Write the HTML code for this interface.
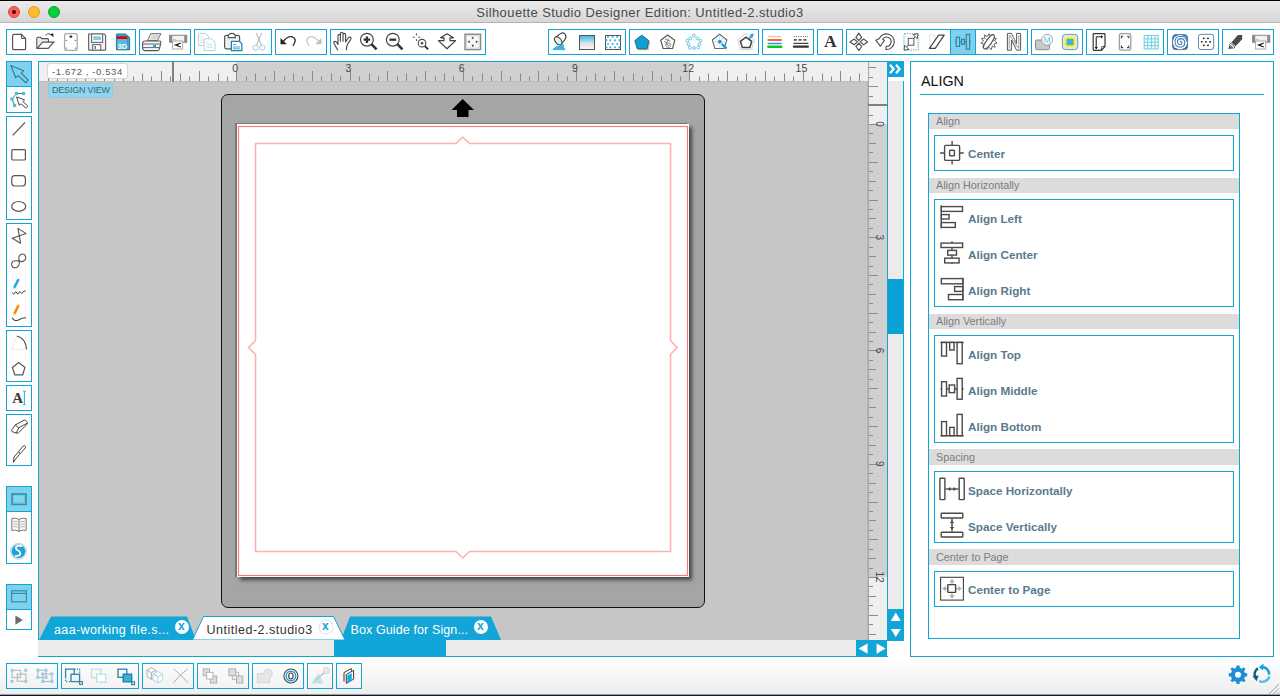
<!DOCTYPE html>
<html><head><meta charset="utf-8">
<style>
*{margin:0;padding:0;box-sizing:border-box}
html,body{width:1280px;height:696px;overflow:hidden;background:#fff;font-family:"Liberation Sans",sans-serif;position:relative}
.a{position:absolute}
#title{left:0;top:0;width:1280px;height:23px;background:linear-gradient(#ebebeb,#d6d6d6);border-top:1px solid #000;border-bottom:1px solid #b4b4b4}
#title .t{left:0;width:1280px;top:4px;text-align:center;font-size:13px;color:#4a4a4a;letter-spacing:0.4px}
.tl{width:12px;height:12px;border-radius:50%}
.grp{border:1px solid #0fa5d6;height:26px;top:29px;background:#fff}
.bgrp{border:1px solid #0fa5d6;height:26px;top:663px;background:linear-gradient(#fcfcfc,#f2f2f2)}
.vgrp{border:1px solid #0fa5d6;width:26px;left:6px;background:#fff}
#canvas{left:38px;top:61px;width:850px;height:579px;background:#c6c6c6;border-left:1px solid #0fa5d6;border-top:1px solid #0fa5d6}
.hdr{background:#dcdcdc;height:15px;font-size:10.8px;color:#7c7c7c;padding-left:7px;line-height:15px;white-space:nowrap}
.ibox{border:1px solid #0fa5d6;background:#fff}
.lbl{font-size:11.7px;font-weight:bold;color:#5a7a8c;white-space:nowrap}
</style></head><body>
<!-- title bar -->
<div id="title" class="a"><div class="a t">Silhouette Studio Designer Edition: Untitled-2.studio3</div>
<div class="a tl" style="left:8px;top:5px;background:#fc5f57;border:1px solid #e2463f"><div class="a" style="left:3px;top:3px;width:4px;height:4px;border-radius:50%;background:#4d0000"></div></div>
<div class="a tl" style="left:28px;top:5px;background:#fdbc2e;border:1px solid #e1a116"></div>
<div class="a tl" style="left:48px;top:5px;background:#03d03f;border:1px solid #0aa32c"></div>
</div>

<!-- top toolbar groups -->
<div class="a grp" style="left:6px;width:130px"></div>
<div class="a grp" style="left:139px;width:52px"></div>
<div class="a grp" style="left:194px;width:78px"></div>
<div class="a grp" style="left:275px;width:52px"></div>
<div class="a grp" style="left:330px;width:156px"></div>
<div class="a grp" style="left:548px;width:78px"></div>
<div class="a grp" style="left:629px;width:130px"></div>
<div class="a grp" style="left:762px;width:52px"></div>
<div class="a grp" style="left:817px;width:26px"></div>
<div class="a grp" style="left:846px;width:182px"></div>
<div class="a grp" style="left:1031px;width:52px"></div>
<div class="a grp" style="left:1086px;width:78px"></div>
<div class="a grp" style="left:1167px;width:52px"></div>
<div class="a grp" style="left:1222px;width:52px"></div>

<!-- canvas -->
<div id="canvas" class="a"></div>
<svg class="a" style="left:39px;top:62px" width="829" height="20">
<rect x="0" y="0" width="829" height="20" fill="#efefef"/>
<rect x="197.40" y="0" width="453.00" height="20" fill="#d0d0d0"/>
<rect x="0" y="19" width="829" height="1" fill="#bdbdbd"/>
<line x1="9.5" y1="9" x2="9.5" y2="19" stroke="#888" stroke-width="1"/>
<line x1="18.5" y1="14.5" x2="18.5" y2="19" stroke="#888" stroke-width="1"/>
<line x1="28.5" y1="11.5" x2="28.5" y2="19" stroke="#888" stroke-width="1"/>
<line x1="37.5" y1="14.5" x2="37.5" y2="19" stroke="#888" stroke-width="1"/>
<line x1="46.5" y1="9" x2="46.5" y2="19" stroke="#888" stroke-width="1"/>
<line x1="56.5" y1="14.5" x2="56.5" y2="19" stroke="#888" stroke-width="1"/>
<line x1="65.5" y1="11.5" x2="65.5" y2="19" stroke="#888" stroke-width="1"/>
<line x1="75.5" y1="14.5" x2="75.5" y2="19" stroke="#888" stroke-width="1"/>
<line x1="84.5" y1="9" x2="84.5" y2="19" stroke="#888" stroke-width="1"/>
<text x="83.0" y="10" font-family="Liberation Sans" font-size="10.5" fill="#444" text-anchor="middle">-3</text>
<line x1="94.5" y1="14.5" x2="94.5" y2="19" stroke="#888" stroke-width="1"/>
<line x1="103.5" y1="11.5" x2="103.5" y2="19" stroke="#888" stroke-width="1"/>
<line x1="112.5" y1="14.5" x2="112.5" y2="19" stroke="#888" stroke-width="1"/>
<line x1="122.5" y1="9" x2="122.5" y2="19" stroke="#888" stroke-width="1"/>
<line x1="131.5" y1="14.5" x2="131.5" y2="19" stroke="#888" stroke-width="1"/>
<line x1="141.5" y1="11.5" x2="141.5" y2="19" stroke="#888" stroke-width="1"/>
<line x1="150.5" y1="14.5" x2="150.5" y2="19" stroke="#888" stroke-width="1"/>
<line x1="160.5" y1="9" x2="160.5" y2="19" stroke="#888" stroke-width="1"/>
<line x1="169.5" y1="14.5" x2="169.5" y2="19" stroke="#888" stroke-width="1"/>
<line x1="179.5" y1="11.5" x2="179.5" y2="19" stroke="#888" stroke-width="1"/>
<line x1="188.5" y1="14.5" x2="188.5" y2="19" stroke="#888" stroke-width="1"/>
<line x1="197.5" y1="9" x2="197.5" y2="19" stroke="#888" stroke-width="1"/>
<text x="196.2" y="10" font-family="Liberation Sans" font-size="10.5" fill="#444" text-anchor="middle">0</text>
<line x1="207.5" y1="14.5" x2="207.5" y2="19" stroke="#888" stroke-width="1"/>
<line x1="216.5" y1="11.5" x2="216.5" y2="19" stroke="#888" stroke-width="1"/>
<line x1="226.5" y1="14.5" x2="226.5" y2="19" stroke="#888" stroke-width="1"/>
<line x1="235.5" y1="9" x2="235.5" y2="19" stroke="#888" stroke-width="1"/>
<line x1="245.5" y1="14.5" x2="245.5" y2="19" stroke="#888" stroke-width="1"/>
<line x1="254.5" y1="11.5" x2="254.5" y2="19" stroke="#888" stroke-width="1"/>
<line x1="263.5" y1="14.5" x2="263.5" y2="19" stroke="#888" stroke-width="1"/>
<line x1="273.5" y1="9" x2="273.5" y2="19" stroke="#888" stroke-width="1"/>
<line x1="282.5" y1="14.5" x2="282.5" y2="19" stroke="#888" stroke-width="1"/>
<line x1="292.5" y1="11.5" x2="292.5" y2="19" stroke="#888" stroke-width="1"/>
<line x1="301.5" y1="14.5" x2="301.5" y2="19" stroke="#888" stroke-width="1"/>
<line x1="311.5" y1="9" x2="311.5" y2="19" stroke="#888" stroke-width="1"/>
<text x="309.4" y="10" font-family="Liberation Sans" font-size="10.5" fill="#444" text-anchor="middle">3</text>
<line x1="320.5" y1="14.5" x2="320.5" y2="19" stroke="#888" stroke-width="1"/>
<line x1="330.5" y1="11.5" x2="330.5" y2="19" stroke="#888" stroke-width="1"/>
<line x1="339.5" y1="14.5" x2="339.5" y2="19" stroke="#888" stroke-width="1"/>
<line x1="348.5" y1="9" x2="348.5" y2="19" stroke="#888" stroke-width="1"/>
<line x1="358.5" y1="14.5" x2="358.5" y2="19" stroke="#888" stroke-width="1"/>
<line x1="367.5" y1="11.5" x2="367.5" y2="19" stroke="#888" stroke-width="1"/>
<line x1="377.5" y1="14.5" x2="377.5" y2="19" stroke="#888" stroke-width="1"/>
<line x1="386.5" y1="9" x2="386.5" y2="19" stroke="#888" stroke-width="1"/>
<line x1="396.5" y1="14.5" x2="396.5" y2="19" stroke="#888" stroke-width="1"/>
<line x1="405.5" y1="11.5" x2="405.5" y2="19" stroke="#888" stroke-width="1"/>
<line x1="414.5" y1="14.5" x2="414.5" y2="19" stroke="#888" stroke-width="1"/>
<line x1="424.5" y1="9" x2="424.5" y2="19" stroke="#888" stroke-width="1"/>
<text x="422.7" y="10" font-family="Liberation Sans" font-size="10.5" fill="#444" text-anchor="middle">6</text>
<line x1="433.5" y1="14.5" x2="433.5" y2="19" stroke="#888" stroke-width="1"/>
<line x1="443.5" y1="11.5" x2="443.5" y2="19" stroke="#888" stroke-width="1"/>
<line x1="452.5" y1="14.5" x2="452.5" y2="19" stroke="#888" stroke-width="1"/>
<line x1="462.5" y1="9" x2="462.5" y2="19" stroke="#888" stroke-width="1"/>
<line x1="471.5" y1="14.5" x2="471.5" y2="19" stroke="#888" stroke-width="1"/>
<line x1="481.5" y1="11.5" x2="481.5" y2="19" stroke="#888" stroke-width="1"/>
<line x1="490.5" y1="14.5" x2="490.5" y2="19" stroke="#888" stroke-width="1"/>
<line x1="499.5" y1="9" x2="499.5" y2="19" stroke="#888" stroke-width="1"/>
<line x1="509.5" y1="14.5" x2="509.5" y2="19" stroke="#888" stroke-width="1"/>
<line x1="518.5" y1="11.5" x2="518.5" y2="19" stroke="#888" stroke-width="1"/>
<line x1="528.5" y1="14.5" x2="528.5" y2="19" stroke="#888" stroke-width="1"/>
<line x1="537.5" y1="9" x2="537.5" y2="19" stroke="#888" stroke-width="1"/>
<text x="535.9" y="10" font-family="Liberation Sans" font-size="10.5" fill="#444" text-anchor="middle">9</text>
<line x1="547.5" y1="14.5" x2="547.5" y2="19" stroke="#888" stroke-width="1"/>
<line x1="556.5" y1="11.5" x2="556.5" y2="19" stroke="#888" stroke-width="1"/>
<line x1="565.5" y1="14.5" x2="565.5" y2="19" stroke="#888" stroke-width="1"/>
<line x1="575.5" y1="9" x2="575.5" y2="19" stroke="#888" stroke-width="1"/>
<line x1="584.5" y1="14.5" x2="584.5" y2="19" stroke="#888" stroke-width="1"/>
<line x1="594.5" y1="11.5" x2="594.5" y2="19" stroke="#888" stroke-width="1"/>
<line x1="603.5" y1="14.5" x2="603.5" y2="19" stroke="#888" stroke-width="1"/>
<line x1="613.5" y1="9" x2="613.5" y2="19" stroke="#888" stroke-width="1"/>
<line x1="622.5" y1="14.5" x2="622.5" y2="19" stroke="#888" stroke-width="1"/>
<line x1="632.5" y1="11.5" x2="632.5" y2="19" stroke="#888" stroke-width="1"/>
<line x1="641.5" y1="14.5" x2="641.5" y2="19" stroke="#888" stroke-width="1"/>
<line x1="650.5" y1="9" x2="650.5" y2="19" stroke="#888" stroke-width="1"/>
<text x="649.2" y="10" font-family="Liberation Sans" font-size="10.5" fill="#444" text-anchor="middle">12</text>
<line x1="660.5" y1="14.5" x2="660.5" y2="19" stroke="#888" stroke-width="1"/>
<line x1="669.5" y1="11.5" x2="669.5" y2="19" stroke="#888" stroke-width="1"/>
<line x1="679.5" y1="14.5" x2="679.5" y2="19" stroke="#888" stroke-width="1"/>
<line x1="688.5" y1="9" x2="688.5" y2="19" stroke="#888" stroke-width="1"/>
<line x1="698.5" y1="14.5" x2="698.5" y2="19" stroke="#888" stroke-width="1"/>
<line x1="707.5" y1="11.5" x2="707.5" y2="19" stroke="#888" stroke-width="1"/>
<line x1="716.5" y1="14.5" x2="716.5" y2="19" stroke="#888" stroke-width="1"/>
<line x1="726.5" y1="9" x2="726.5" y2="19" stroke="#888" stroke-width="1"/>
<line x1="735.5" y1="14.5" x2="735.5" y2="19" stroke="#888" stroke-width="1"/>
<line x1="745.5" y1="11.5" x2="745.5" y2="19" stroke="#888" stroke-width="1"/>
<line x1="754.5" y1="14.5" x2="754.5" y2="19" stroke="#888" stroke-width="1"/>
<line x1="764.5" y1="9" x2="764.5" y2="19" stroke="#888" stroke-width="1"/>
<text x="762.4" y="10" font-family="Liberation Sans" font-size="10.5" fill="#444" text-anchor="middle">15</text>
<line x1="773.5" y1="14.5" x2="773.5" y2="19" stroke="#888" stroke-width="1"/>
<line x1="783.5" y1="11.5" x2="783.5" y2="19" stroke="#888" stroke-width="1"/>
<line x1="792.5" y1="14.5" x2="792.5" y2="19" stroke="#888" stroke-width="1"/>
<line x1="801.5" y1="9" x2="801.5" y2="19" stroke="#888" stroke-width="1"/>
<line x1="811.5" y1="14.5" x2="811.5" y2="19" stroke="#888" stroke-width="1"/>
<line x1="820.5" y1="11.5" x2="820.5" y2="19" stroke="#888" stroke-width="1"/>
</svg>
<svg class="a" style="left:868px;top:62px" width="19" height="578">
<rect x="0" y="0" width="19" height="578" fill="#efefef"/>
<rect x="0" y="62.00" width="19" height="453.00" fill="#d0d0d0"/>
<rect x="0" y="0" width="1" height="578" fill="#a8a8a8"/>
<line x1="1" y1="5.5" x2="8" y2="5.5" stroke="#8a8a8a" stroke-width="1"/>
<line x1="1" y1="15.5" x2="5" y2="15.5" stroke="#8a8a8a" stroke-width="1"/>
<line x1="1" y1="24.5" x2="10" y2="24.5" stroke="#8a8a8a" stroke-width="1"/>
<line x1="1" y1="34.5" x2="5" y2="34.5" stroke="#8a8a8a" stroke-width="1"/>
<line x1="1" y1="43.5" x2="8" y2="43.5" stroke="#8a8a8a" stroke-width="1"/>
<line x1="1" y1="53.5" x2="5" y2="53.5" stroke="#8a8a8a" stroke-width="1"/>
<line x1="1" y1="62.5" x2="10" y2="62.5" stroke="#8a8a8a" stroke-width="1"/>
<text transform="translate(8,62.0) rotate(90)" x="0" y="0" font-family="Liberation Sans" font-size="10" fill="#4a4a4a" text-anchor="middle">0</text>
<line x1="1" y1="71.5" x2="5" y2="71.5" stroke="#8a8a8a" stroke-width="1"/>
<line x1="1" y1="81.5" x2="8" y2="81.5" stroke="#8a8a8a" stroke-width="1"/>
<line x1="1" y1="90.5" x2="5" y2="90.5" stroke="#8a8a8a" stroke-width="1"/>
<line x1="1" y1="100.5" x2="10" y2="100.5" stroke="#8a8a8a" stroke-width="1"/>
<line x1="1" y1="109.5" x2="5" y2="109.5" stroke="#8a8a8a" stroke-width="1"/>
<line x1="1" y1="119.5" x2="8" y2="119.5" stroke="#8a8a8a" stroke-width="1"/>
<line x1="1" y1="128.5" x2="5" y2="128.5" stroke="#8a8a8a" stroke-width="1"/>
<line x1="1" y1="138.5" x2="10" y2="138.5" stroke="#8a8a8a" stroke-width="1"/>
<line x1="1" y1="147.5" x2="5" y2="147.5" stroke="#8a8a8a" stroke-width="1"/>
<line x1="1" y1="156.5" x2="8" y2="156.5" stroke="#8a8a8a" stroke-width="1"/>
<line x1="1" y1="166.5" x2="5" y2="166.5" stroke="#8a8a8a" stroke-width="1"/>
<line x1="1" y1="175.5" x2="10" y2="175.5" stroke="#8a8a8a" stroke-width="1"/>
<text transform="translate(8,175.2) rotate(90)" x="0" y="0" font-family="Liberation Sans" font-size="10" fill="#4a4a4a" text-anchor="middle">3</text>
<line x1="1" y1="185.5" x2="5" y2="185.5" stroke="#8a8a8a" stroke-width="1"/>
<line x1="1" y1="194.5" x2="8" y2="194.5" stroke="#8a8a8a" stroke-width="1"/>
<line x1="1" y1="204.5" x2="5" y2="204.5" stroke="#8a8a8a" stroke-width="1"/>
<line x1="1" y1="213.5" x2="10" y2="213.5" stroke="#8a8a8a" stroke-width="1"/>
<line x1="1" y1="222.5" x2="5" y2="222.5" stroke="#8a8a8a" stroke-width="1"/>
<line x1="1" y1="232.5" x2="8" y2="232.5" stroke="#8a8a8a" stroke-width="1"/>
<line x1="1" y1="241.5" x2="5" y2="241.5" stroke="#8a8a8a" stroke-width="1"/>
<line x1="1" y1="251.5" x2="10" y2="251.5" stroke="#8a8a8a" stroke-width="1"/>
<line x1="1" y1="260.5" x2="5" y2="260.5" stroke="#8a8a8a" stroke-width="1"/>
<line x1="1" y1="270.5" x2="8" y2="270.5" stroke="#8a8a8a" stroke-width="1"/>
<line x1="1" y1="279.5" x2="5" y2="279.5" stroke="#8a8a8a" stroke-width="1"/>
<line x1="1" y1="288.5" x2="10" y2="288.5" stroke="#8a8a8a" stroke-width="1"/>
<text transform="translate(8,288.5) rotate(90)" x="0" y="0" font-family="Liberation Sans" font-size="10" fill="#4a4a4a" text-anchor="middle">6</text>
<line x1="1" y1="298.5" x2="5" y2="298.5" stroke="#8a8a8a" stroke-width="1"/>
<line x1="1" y1="307.5" x2="8" y2="307.5" stroke="#8a8a8a" stroke-width="1"/>
<line x1="1" y1="317.5" x2="5" y2="317.5" stroke="#8a8a8a" stroke-width="1"/>
<line x1="1" y1="326.5" x2="10" y2="326.5" stroke="#8a8a8a" stroke-width="1"/>
<line x1="1" y1="336.5" x2="5" y2="336.5" stroke="#8a8a8a" stroke-width="1"/>
<line x1="1" y1="345.5" x2="8" y2="345.5" stroke="#8a8a8a" stroke-width="1"/>
<line x1="1" y1="355.5" x2="5" y2="355.5" stroke="#8a8a8a" stroke-width="1"/>
<line x1="1" y1="364.5" x2="10" y2="364.5" stroke="#8a8a8a" stroke-width="1"/>
<line x1="1" y1="373.5" x2="5" y2="373.5" stroke="#8a8a8a" stroke-width="1"/>
<line x1="1" y1="383.5" x2="8" y2="383.5" stroke="#8a8a8a" stroke-width="1"/>
<line x1="1" y1="392.5" x2="5" y2="392.5" stroke="#8a8a8a" stroke-width="1"/>
<line x1="1" y1="402.5" x2="10" y2="402.5" stroke="#8a8a8a" stroke-width="1"/>
<text transform="translate(8,401.8) rotate(90)" x="0" y="0" font-family="Liberation Sans" font-size="10" fill="#4a4a4a" text-anchor="middle">9</text>
<line x1="1" y1="411.5" x2="5" y2="411.5" stroke="#8a8a8a" stroke-width="1"/>
<line x1="1" y1="421.5" x2="8" y2="421.5" stroke="#8a8a8a" stroke-width="1"/>
<line x1="1" y1="430.5" x2="5" y2="430.5" stroke="#8a8a8a" stroke-width="1"/>
<line x1="1" y1="440.5" x2="10" y2="440.5" stroke="#8a8a8a" stroke-width="1"/>
<line x1="1" y1="449.5" x2="5" y2="449.5" stroke="#8a8a8a" stroke-width="1"/>
<line x1="1" y1="458.5" x2="8" y2="458.5" stroke="#8a8a8a" stroke-width="1"/>
<line x1="1" y1="468.5" x2="5" y2="468.5" stroke="#8a8a8a" stroke-width="1"/>
<line x1="1" y1="477.5" x2="10" y2="477.5" stroke="#8a8a8a" stroke-width="1"/>
<line x1="1" y1="487.5" x2="5" y2="487.5" stroke="#8a8a8a" stroke-width="1"/>
<line x1="1" y1="496.5" x2="8" y2="496.5" stroke="#8a8a8a" stroke-width="1"/>
<line x1="1" y1="506.5" x2="5" y2="506.5" stroke="#8a8a8a" stroke-width="1"/>
<line x1="1" y1="515.5" x2="10" y2="515.5" stroke="#8a8a8a" stroke-width="1"/>
<text transform="translate(8,515.0) rotate(90)" x="0" y="0" font-family="Liberation Sans" font-size="10" fill="#4a4a4a" text-anchor="middle">12</text>
<line x1="1" y1="524.5" x2="5" y2="524.5" stroke="#8a8a8a" stroke-width="1"/>
<line x1="1" y1="534.5" x2="8" y2="534.5" stroke="#8a8a8a" stroke-width="1"/>
<line x1="1" y1="543.5" x2="5" y2="543.5" stroke="#8a8a8a" stroke-width="1"/>
<line x1="1" y1="553.5" x2="10" y2="553.5" stroke="#8a8a8a" stroke-width="1"/>
<line x1="1" y1="562.5" x2="5" y2="562.5" stroke="#8a8a8a" stroke-width="1"/>
<line x1="1" y1="572.5" x2="8" y2="572.5" stroke="#8a8a8a" stroke-width="1"/>
</svg>
<!-- corner box -->
<div class="a" style="left:47px;top:63px;width:81px;height:16px;background:#fff;border:1px solid #d8d8d8;border-radius:3px;font-size:9.5px;color:#5a5a5a;line-height:15px;padding-left:4px;letter-spacing:0.6px;white-space:nowrap">-1.672 , -0.534</div>
<div class="a" style="left:172px;top:62px;width:2px;height:20px;background:#808080"></div>
<div class="a" style="left:868px;top:104px;width:19px;height:2px;background:#808080"></div>
<div class="a" style="left:48px;top:83px;width:65px;height:15px;background:#8fd6ee;border:1px solid #9ac8d8;font-size:9px;color:#3f6676;line-height:12px;padding-left:3px;white-space:nowrap;letter-spacing:-0.2px">DESIGN VIEW</div>
<!-- mat -->
<div class="a" style="left:221px;top:94px;width:484px;height:514px;background:#a5a5a5;border:1.5px solid #111;border-radius:7px"></div>
<div class="a" style="left:237px;top:124px;width:452px;height:453px;background:#fff;box-shadow:3px 3px 4px rgba(0,0,0,0.6), -2px 0 0 #7a7a7a, -2px -1px 0 #7a7a7a"></div>
<svg class="a" style="left:0;top:0" width="1280" height="696">
<path d="M457 117V110H451.5L462.7 99L474 110H468.5V117Z" fill="#000"/>
<rect x="238.5" y="126.5" width="449" height="449" fill="none" stroke="#ff7a7a" stroke-width="1.2"/>
<path d="M255.5 143.5H456L462.7 137L469.5 143.5H670.5V340.5L677 347.5L670.5 354.5V551.5H469.5L462.7 558L456 551.5H255.5V354.5L248.5 347.5L255.5 340.5Z" fill="none" stroke="#ffb0b0" stroke-width="1.6"/>
</svg>
<!-- tabs -->
<svg class="a" style="left:0;top:0" width="1280" height="696">
<path d="M39 640L51 616.5H187L196 640Z" fill="#12a5d7"/>
<path d="M341 640L350 616.5H491L501 640Z" fill="#12a5d7"/>
<path d="M192.5 640L203.5 616.5H333.5L345 640Z" fill="#fff" stroke="#12a5d7" stroke-width="1"/>
<circle cx="182" cy="627" r="7" fill="#fff"/>
<circle cx="481" cy="627" r="7" fill="#fff"/>
<circle cx="326" cy="627" r="7" fill="#fff" stroke="#e0e0e0" stroke-width="1"/>
</svg>
<div class="a" style="left:54px;top:623px;font-size:12.5px;line-height:14px;letter-spacing:0.37px;color:#fff;white-space:nowrap">aaa-working file.s...</div>
<div class="a" style="left:206.5px;top:623px;font-size:12.5px;line-height:14px;letter-spacing:0.5px;color:#333;white-space:nowrap">Untitled-2.studio3</div>
<div class="a" style="left:350.5px;top:623px;font-size:12.5px;line-height:14px;letter-spacing:0.11px;color:#fff;white-space:nowrap">Box Guide for Sign...</div>
<div class="a" style="left:178px;top:619px;font-size:12px;font-weight:bold;color:#12a5d7">x</div>
<div class="a" style="left:477px;top:619px;font-size:12px;font-weight:bold;color:#12a5d7">x</div>
<div class="a" style="left:322px;top:619px;font-size:12px;font-weight:bold;color:#12a5d7">x</div>
<!-- h scrollbar -->
<div class="a" style="left:38px;top:640px;width:818px;height:16px;background:#ebebeb"></div>
<div class="a" style="left:334px;top:640px;width:112px;height:16px;background:#12a5d7"></div>
<div class="a" style="left:856px;top:640px;width:31px;height:16px;background:#12a5d7"></div>
<div class="a" style="left:38px;top:656px;width:850px;height:1px;background:#0fa5d6"></div>
<!-- v scrollbar -->
<div class="a" style="left:887px;top:61px;width:1px;height:580px;background:#0fa5d6"></div>
<div class="a" style="left:888px;top:61px;width:16px;height:16px;background:#12a5d7"></div>
<div class="a" style="left:888px;top:81px;width:15px;height:528px;background:#ebebeb"></div>
<div class="a" style="left:903px;top:81px;width:1px;height:560px;background:#0fa5d6"></div>
<div class="a" style="left:888px;top:279px;width:15px;height:55px;background:#0aa2d6"></div><div class="a" style="left:867px;top:81px;width:1px;height:559px;background:#b4b4b4"></div>
<div class="a" style="left:888px;top:609px;width:16px;height:32px;background:#12a5d7"></div>
<svg class="a" style="left:0;top:0" width="1280" height="696">
<path d="M890 73.2L893.6 69L890 64.8M896 73.2L899.6 69L896 64.8" fill="none" stroke="#fff" stroke-width="2.2"/>
<path d="M890.8 621L895.8 612.6L900.8 621Z M890.8 629L895.8 637L900.8 629Z" fill="#fff"/>
<path d="M858.6 648.6L867.6 643.4V653.8Z M876.6 643.4L885.6 648.6L876.6 653.8Z" fill="#fff"/>
</svg>

<!-- right panel -->
<div class="a" style="left:0;top:657px;width:1280px;height:39px;background:linear-gradient(#fff,#ededed)"></div>
<div class="a" style="left:0;top:694px;width:1280px;height:1px;background:#9aa0a6"></div><div class="a" style="left:0;top:695px;width:1280px;height:1px;background:#0d1b28"></div>
<div class="a" style="left:910px;top:61px;width:364px;height:596px;border:1px solid #0fa5d6;background:#fff"></div>
<div class="a" style="left:921px;top:72px;font-size:14.3px;color:#111;line-height:18px">ALIGN</div>
<div class="a" style="left:920px;top:94px;width:344px;height:1px;background:#0fa5d6"></div>
<div class="a" style="left:928px;top:113px;width:312px;height:526px;border:1px solid #0fa5d6"></div>
<div class="a hdr" style="left:929px;top:114px;width:310px">Align</div>
<div class="a hdr" style="left:929px;top:178px;width:310px">Align Horizontally</div>
<div class="a hdr" style="left:929px;top:314px;width:310px">Align Vertically</div>
<div class="a hdr" style="left:929px;top:449px;width:310px;height:16px;line-height:16px">Spacing</div>
<div class="a hdr" style="left:929px;top:549px;width:310px;height:16px;line-height:16px">Center to Page</div>
<div class="a ibox" style="left:934px;top:135px;width:300px;height:36px"></div>
<div class="a ibox" style="left:934px;top:199px;width:300px;height:108px"></div>
<div class="a ibox" style="left:934px;top:335px;width:300px;height:108px"></div>
<div class="a ibox" style="left:934px;top:471px;width:300px;height:72px"></div>
<div class="a ibox" style="left:934px;top:571px;width:300px;height:36px"></div>
<div class="a lbl" style="left:968px;top:146px;line-height:16px">Center</div>
<div class="a lbl" style="left:968px;top:211px;line-height:16px">Align Left</div>
<div class="a lbl" style="left:968px;top:247px;line-height:16px">Align Center</div>
<div class="a lbl" style="left:968px;top:283px;line-height:16px">Align Right</div>
<div class="a lbl" style="left:968px;top:347px;line-height:16px">Align Top</div>
<div class="a lbl" style="left:968px;top:383px;line-height:16px">Align Middle</div>
<div class="a lbl" style="left:968px;top:419px;line-height:16px">Align Bottom</div>
<div class="a lbl" style="left:968px;top:483px;line-height:16px">Space Horizontally</div>
<div class="a lbl" style="left:968px;top:519px;line-height:16px">Space Vertically</div>
<div class="a lbl" style="left:968px;top:582px;line-height:16px">Center to Page</div>
<!-- left toolbar -->
<div class="a vgrp" style="top:61px;height:52px"></div>
<div class="a vgrp" style="top:116px;height:104px"></div>
<div class="a vgrp" style="top:223px;height:104px"></div>
<div class="a vgrp" style="top:330px;height:52px"></div>
<div class="a vgrp" style="top:385px;height:26px"></div>
<div class="a vgrp" style="top:414px;height:52px"></div>
<div class="a vgrp" style="top:486px;height:78px"></div>
<div class="a vgrp" style="top:584px;height:46px"></div>
<div class="a" style="left:7px;top:62px;width:24px;height:25px;background:#80d1ec;border-bottom:1px solid #0fa5d6"></div>
<div class="a" style="left:7px;top:487px;width:24px;height:25px;background:#80d1ec;border-bottom:1px solid #0fa5d6"></div>
<div class="a" style="left:7px;top:585px;width:24px;height:25px;background:#80d1ec;border-bottom:1px solid #0fa5d6"></div>
<!-- bottom toolbar -->
<div class="a bgrp" style="left:6px;width:52px"></div>
<div class="a bgrp" style="left:61px;width:78px"></div>
<div class="a bgrp" style="left:142px;width:52px"></div>
<div class="a bgrp" style="left:197px;width:52px"></div>
<div class="a bgrp" style="left:252px;width:52px"></div>
<div class="a bgrp" style="left:307px;width:26px"></div>
<div class="a bgrp" style="left:336px;width:26px"></div>
<svg class="a" style="left:0;top:0" width="1280" height="60">
<defs>
<linearGradient id="gr1" x1="0" y1="0" x2="0" y2="1"><stop offset="0" stop-color="#3cb9e4"/><stop offset="0.4" stop-color="#9fd8ec"/><stop offset="0.5" stop-color="#dcdcdc"/><stop offset="1" stop-color="#fafafa"/></linearGradient>
</defs>
<!-- G0 -->
<path d="M12.6 35.8Q12.6 34.4 14 34.4H21.4L25.6 38.4V48.4Q25.6 49.7 24.3 49.7H14Q12.6 49.7 12.6 48.4Z" fill="#fff" stroke="#555" stroke-width="1.2"/>
<path d="M21.4 34.4V37.2Q21.4 38.4 22.6 38.4H25.6" fill="none" stroke="#555" stroke-width="1.1"/>
<path d="M36.8 48.2V38.6Q36.8 37.3 38 37.3H40.6L41.8 38.6H47.3Q48.5 38.6 48.5 39.8V42.2" fill="#ececec" stroke="#555" stroke-width="1.1"/>
<path d="M37.2 48.4L42.6 42.2H53.8L48.2 48.4Z" fill="#fff" stroke="#555" stroke-width="1.2"/>
<path d="M45.6 35.8Q47 32.4 50.8 34.6" fill="none" stroke="#444" stroke-width="0.9"/>
<path d="M49.8 34.2L53.6 37.2L53.2 33.2Z" fill="#222"/>
<rect x="64.6" y="33.6" width="12.6" height="16.8" rx="2.2" fill="#fff" stroke="#aaa" stroke-width="1.3"/>
<path d="M69.5 36.6H72.3M70.9 35.2V38" stroke="#333" stroke-width="1.3"/>
<path d="M65.6 40.4H67.2M74.6 40.4H76.2M65.6 48.2H67.2M74.6 48.2H76.2" stroke="#777" stroke-width="1"/>
<path d="M88.6 34H104.2L105.6 35.4V49.6Q105.6 50.2 105 50.2H89.2Q88.6 50.2 88.6 49.6Z" fill="#f2f2f2" stroke="#6a6a6a" stroke-width="1.2"/>
<rect x="91.6" y="34" width="11" height="8.4" fill="#fff" stroke="#6a6a6a" stroke-width="1.1"/>
<rect x="93.3" y="36.3" width="7.6" height="3.6" fill="#7ecbe2"/>
<rect x="92.7" y="44.6" width="8" height="5.6" fill="#fff" stroke="#6a6a6a" stroke-width="1.1"/>
<rect x="94.6" y="46" width="1.2" height="3" fill="#555"/>
<path d="M116.4 34H125.4L129.6 37.4V49.8H116.4Z" fill="#3aa6cf" stroke="#1c7aa0" stroke-width="1"/>
<path d="M117.4 36.8V49H126.6V37.2" fill="#56bde0"/>
<rect x="117" y="36.2" width="10.4" height="2.8" fill="#e00404"/>
<text x="117.6" y="48.6" font-family="Liberation Sans" font-weight="bold" font-size="7.5" fill="#fff">3D</text>
<!-- G1 -->
<path d="M150.8 33.6H161L157.4 40.6H147.6Z" fill="#e6e6e6" stroke="#777" stroke-width="1"/>
<path d="M152 36H158.4M151 38.2H157.4" stroke="#bbb" stroke-width="0.8"/>
<path d="M144.6 41H159.6Q161.2 41 160.8 43.2L159.4 49.2Q159 50.6 157.4 50.6H145.4Q142.6 50.6 142.6 47.2V44Q142.6 41 144.6 41Z" fill="#f5f5f5" stroke="#555" stroke-width="1.1"/>
<path d="M143 44H160M143 47.6H159.4" stroke="#666" stroke-width="1"/>
<rect x="153" y="44.8" width="3" height="2.6" fill="#1aa8e0"/>
<rect x="169.6" y="35.3" width="17.2" height="7" fill="#f2f2f2" stroke="#8a8a8a" stroke-width="1"/>
<rect x="169.6" y="35.3" width="2.6" height="7" fill="#8a8a8a"/>
<rect x="184.2" y="35.3" width="2.6" height="7" fill="#8a8a8a"/>
<path d="M172.6 39.6H176" stroke="#7cc8e4" stroke-width="0.8"/>
<rect x="172.6" y="41" width="10" height="8" fill="#fff" stroke="#aaa" stroke-width="1"/>
<path d="M180.8 43L175.6 45L180.8 47M178 44V46" fill="none" stroke="#222" stroke-width="1.3"/>
<!-- G2 -->
<path d="M198.6 34.6Q198.6 33.4 199.8 33.4H205.6L208.6 36.4V45.6H198.6Z" fill="#fff" stroke="#c8c8c8" stroke-width="1"/>
<path d="M200.6 37.6H202.6M200.6 40H204M200.6 42.4H204" stroke="#ccc" stroke-width="0.8"/>
<path d="M204.2 38.8H211.6L215 42.2V50.6H204.2Z" fill="#fff" stroke="#a6d8e8" stroke-width="1"/>
<path d="M206.4 42.4H208M206.4 44.8H212.4M206.4 47.2H212.4" stroke="#a6d8e8" stroke-width="0.8"/>
<rect x="224.6" y="35.4" width="15" height="13.4" rx="1.8" fill="#f0f0f0" stroke="#555" stroke-width="1.2"/>
<path d="M228.2 37.6Q228.2 33.4 231.8 33.4Q235.4 33.4 235.4 37.6Z" fill="#fff" stroke="#555" stroke-width="1.1"/>
<path d="M231.4 41.4H239.4L241.8 43.8V50.6H231.4Z" fill="#fff" stroke="#1a86b0" stroke-width="1.3"/>
<path d="M233 44.6H236.4M233 47H240M233 48.8H240" stroke="#3a9cc0" stroke-width="0.9"/>
<path d="M256.2 33L261.4 45.2M261.6 33L256.6 45.2" stroke="#a8a8a8" stroke-width="0.9"/>
<circle cx="255.6" cy="47.6" r="2.6" fill="none" stroke="#9ccfe0" stroke-width="1"/>
<circle cx="262.4" cy="47.6" r="2.6" fill="none" stroke="#9ccfe0" stroke-width="1"/>
<!-- G3 -->
<path d="M283.4 41.2Q288 35.6 292.4 36.8Q296.4 38.6 294.6 42.6Q294 44.4 292.8 45.8" fill="none" stroke="#333" stroke-width="1.4"/>
<path d="M280.5 38V44.3H286.8Z" fill="#222"/>
<path d="M318.6 41.2Q314 35.6 309.6 36.8Q305.6 38.6 307.4 42.6Q308 44.4 309.2 45.8" fill="none" stroke="#c6c6c6" stroke-width="1.3"/>
<path d="M321.5 38V44.3H315.2Z" fill="#c0c0c0"/>
<!-- G4 -->
<path d="M337.8 50.2L334.2 43.8Q333.2 41.6 334.8 41.4Q336 41.2 337 42.8L338 44.4V35.6Q338 34.4 339.2 34.4Q340.4 34.4 340.4 35.6V41.2V33.4Q340.4 32.2 341.7 32.2Q343 32.2 343 33.4V41.2V34.6Q343 33.4 344.3 33.4Q345.6 33.4 345.6 34.6V42L348.4 37.8Q349.4 36.6 350.6 37.2Q351.6 38 350.8 39.2L347.4 44.6Q346.4 46.6 346.4 50.2" fill="#fff" stroke="#444" stroke-width="1.1" stroke-linejoin="round"/>
<circle cx="366.9" cy="39.7" r="6.4" fill="#fff" stroke="#444" stroke-width="1.2"/>
<path d="M363.6 39.7H370.2M366.9 36.4V43" stroke="#333" stroke-width="2.3"/>
<path d="M371.4 44.2L376.6 49.4" stroke="#333" stroke-width="2.6"/>
<circle cx="392.8" cy="39.7" r="6.4" fill="#fff" stroke="#444" stroke-width="1.2"/>
<path d="M389.4 39.7H396.2" stroke="#333" stroke-width="2.3"/>
<path d="M397.3 44.2L402.5 49.4" stroke="#333" stroke-width="2.6"/>
<path d="M416.5 33.4V35.2M416.5 39.2V41M412.8 37.2H414.6M418.4 37.2H420.2" stroke="#444" stroke-width="1.1"/>
<circle cx="422" cy="43.2" r="3.8" fill="#fff" stroke="#444" stroke-width="1.1"/>
<path d="M420.7 43.2H423.3M422 41.9V44.5" stroke="#444" stroke-width="1.4"/>
<path d="M424.8 46L428.2 49.4" stroke="#333" stroke-width="1.8"/>
<path d="M447 33.8L440.6 37.8H444V40.6H438.4L447 48.8L455.6 40.6H450V37.8H453.4Z" fill="#fff" stroke="#444" stroke-width="1.2" stroke-linejoin="round"/>
<rect x="465" y="34.2" width="15.6" height="15.4" fill="#eee" stroke="#8a8a8a" stroke-width="1.4"/>
<rect x="466.6" y="35.8" width="12.4" height="12.2" fill="#fafafa" stroke="#d0d0d0" stroke-width="0.8"/>
<path d="M471.4 38.8L472.8 36.4L474.2 38.8ZM471.4 44.8L472.8 47.2L474.2 44.8ZM469.8 40.4L467.4 41.8L469.8 43.2ZM475.8 40.4L478.2 41.8L475.8 43.2Z" fill="#444"/>
<!-- G5 -->
<path d="M555.6 37.2L560.8 33.4Q563.6 32 565.4 34.6Q566.8 37 564.6 40.2L561 44.2" fill="#fff" stroke="#444" stroke-width="1.1"/>
<ellipse cx="558.2" cy="40.8" rx="2.9" ry="4.6" transform="rotate(-38 558.2 40.8)" fill="#ececec" stroke="#444" stroke-width="1.1"/>
<path d="M553 48.6Q556 46.2 559.6 45.6Q562 45 563 43.6L563.8 45.2Q563.2 47 565.4 49.2Q566.2 50.4 563.6 50.2Q558 49.6 553.6 50.2Q552.4 49.6 553 48.6Z" fill="#3ab6e0"/>
<rect x="579.5" y="35.5" width="15" height="14" fill="url(#gr1)" stroke="#555" stroke-width="1"/>
<rect x="605.5" y="35.5" width="15" height="14" fill="#fff" stroke="#555" stroke-width="1"/>
<g fill="#3ab6e0"><circle cx="608" cy="37" r="1.1"/><circle cx="612.6" cy="37" r="1.1"/><circle cx="617.2" cy="37" r="1.1"/><circle cx="610.3" cy="40.3" r="1.1"/><circle cx="614.9" cy="40.3" r="1.1"/><circle cx="619.4" cy="40.3" r="1.1"/><circle cx="606.5" cy="40.3" r="1.1"/><circle cx="608" cy="44" r="1.1"/><circle cx="612.6" cy="44" r="1.1"/><circle cx="617.2" cy="44" r="1.1"/><circle cx="606.5" cy="47.3" r="1.1"/><circle cx="610.3" cy="47.3" r="1.1"/><circle cx="614.9" cy="47.3" r="1.1"/><circle cx="619.4" cy="47.3" r="1.1"/></g>
<!-- G6 -->
<path d="M643.2 36.6L650.2 42L648.4 50.2H638.6L636.2 42Z" fill="#999" opacity="0.7"/>
<path d="M641.8 35.1L648.8 40.6L647 48.8H637.2L634.8 40.6Z" fill="#0ea0cf" stroke="#23566a" stroke-width="0.8"/>
<path d="M667.7 35.1L674.7 40.3L672.6 48.5H663.1L660.7 40.3Z" fill="#fff" stroke="#555" stroke-width="1.2"/>
<path d="M665 39L670.6 41.4M664 41.6L671.4 44.4M665.6 44L671 46.4M666 46.6L669.6 47.6M668.6 38.6L665.4 45.8" stroke="#777" stroke-width="0.9"/>
<g fill="#fff" stroke="#4ec0e6" stroke-width="0.9"><circle cx="693.9" cy="35.6" r="1.4"/><circle cx="697.4" cy="38.4" r="1.4"/><circle cx="700.5" cy="40.6" r="1.4"/><circle cx="699.4" cy="44.2" r="1.4"/><circle cx="698.3" cy="47.6" r="1.4"/><circle cx="694" cy="48" r="1.4"/><circle cx="689.8" cy="47.6" r="1.4"/><circle cx="688.5" cy="44.2" r="1.4"/><circle cx="687.4" cy="40.6" r="1.4"/><circle cx="690.4" cy="38.4" r="1.4"/></g>
<path d="M719.6 34.3L726.9 40L724.1 48.5H714.9L712.3 40Z" fill="#fff" stroke="#666" stroke-width="1.1"/>
<path d="M719.7 36V39.6M714.4 41.8H717.6M722 41.8H725M716.4 46L718.4 44M719.7 44.4V47.6M716.2 37.8L718 40M723.2 37.8L721.4 40" stroke="#ccc" stroke-width="0.8"/>
<circle cx="719.8" cy="41.8" r="2" fill="#1a9ee0"/>
<path d="M721.8 43.8L726.6 48.6" stroke="#1a9ee0" stroke-width="2.4"/>
<path d="M746 33.4L754.4 39.8L751.6 49.8H740.4L737.6 39.8Z" fill="none" stroke="#cfcfcf" stroke-width="0.9"/>
<path d="M746 37.2L751.7 41.3L749.9 47.5H742.4L740.3 41.3Z" fill="#fff" stroke="#444" stroke-width="1.5"/>
<path d="M749.2 38.6L752.4 35.4" stroke="#1aa0d8" stroke-width="1.8"/>
<path d="M753.8 33.4L749.8 34.6L752.6 37.4Z" fill="#1aa0d8"/>
<!-- G7 -->
<path d="M768.2 36.6H781.2" stroke="#f6bf76" stroke-width="1.1"/>
<path d="M768.4 39.9H781" stroke="#ff5c5c" stroke-width="2" stroke-linecap="round"/>
<path d="M768.4 43.4H781" stroke="#1aa0d8" stroke-width="1.5" stroke-linecap="round"/>
<path d="M768.4 46.7H781.2" stroke="#0cc424" stroke-width="2.6" stroke-linecap="round"/>
<path d="M793.6 36.6H808" stroke="#555" stroke-width="1" stroke-dasharray="1 1.3"/>
<path d="M793.8 39.9H808" stroke="#555" stroke-width="1.8" stroke-dasharray="3 1.8"/>
<path d="M794 43.4H807.8" stroke="#444" stroke-width="1.4" stroke-linecap="round"/>
<path d="M794 46.7H807.8" stroke="#333" stroke-width="2.3" stroke-linecap="round"/>
<!-- G8 -->
<text x="830.2" y="47.4" font-family="Liberation Serif" font-weight="bold" font-size="17.5" fill="#333" text-anchor="middle">A</text>
<!-- G9 -->
<g fill="#fff" stroke="#555" stroke-width="1.2" stroke-linejoin="round">
<path d="M858.8 33.2L861.7 37.4L858.8 40.7L855.9 37.4Z"/><path d="M858.8 50.4L861.7 46.5L858.8 43.1L855.9 46.5Z"/>
<path d="M850 41.9L854.1 39L857.4 41.9L854.1 44.8Z"/><path d="M867.6 41.9L863.6 39L860.2 41.9L863.6 44.8Z"/>
</g>
<path d="M879.36 38.56A7.8 7.8 0 1 1 886 49.5L886.2 46.3A4.6 4.6 0 1 0 882.6 39.26L884.4 40.4L880.3 46.2L875.8 40.2Z" fill="#fff" stroke="#4a4a4a" stroke-width="1.1" stroke-linejoin="round"/>
<rect x="904" y="33.8" width="14.2" height="16.2" rx="1" fill="none" stroke="#3a92b8" stroke-width="1.1" stroke-dasharray="1 1.3"/>
<rect x="908.3" y="38.4" width="5.6" height="6.8" fill="#fff" stroke="#6a6a6a" stroke-width="1.1"/>
<path d="M913.9 38.4L915.8 36.2M908.3 45.2L906.4 47.4" stroke="#555" stroke-width="1"/>
<path d="M918 33.6L913.2 34.6L917.2 38.8ZM904 50.2L904.8 45.2L908.8 49.4Z" fill="#fff" stroke="#555" stroke-width="1" stroke-linejoin="round"/>
<rect x="929.6" y="35" width="5.4" height="13.4" fill="none" stroke="#e4e4e4" stroke-width="0.8"/>
<path d="M929.4 48.4L938.6 35.2H944.2L935.2 48.4Z" fill="#fff" stroke="#444" stroke-width="1.2" stroke-linejoin="round"/>
<rect x="950.5" y="29.5" width="25" height="25" fill="#80d1ec" stroke="#0fa5d6" stroke-width="1"/>
<path d="M955 41.8H971" stroke="#2a7f9e" stroke-width="1"/>
<rect x="956.2" y="37.2" width="3.4" height="9.2" fill="#80d1ec" stroke="#2a7f9e" stroke-width="1.1"/>
<rect x="961.6" y="39.3" width="2.8" height="5" fill="#80d1ec" stroke="#2a7f9e" stroke-width="1.1"/>
<rect x="966.3" y="34.4" width="3.4" height="14.8" fill="#80d1ec" stroke="#2a7f9e" stroke-width="1.1"/>
<path d="M989.00 33.60L990.58 36.43L993.43 34.90L993.23 38.13L996.46 38.39L994.54 41.00L997.12 42.97L994.09 44.13L995.20 47.17L992.03 46.51L991.31 49.67L989.00 47.40L986.69 49.67L985.97 46.51L982.80 47.17L983.91 44.13L980.88 42.97L983.46 41.00L981.54 38.39L984.77 38.13L984.57 34.90L987.42 36.43Z" fill="#fff" stroke="#555" stroke-width="0.9" stroke-linejoin="round"/>
<path d="M985.6 38L987 40.4M992.4 45.6L991 43.2M984 42.6L986.4 43M994 41L991.6 40.6" stroke="#999" stroke-width="0.7"/>
<ellipse cx="989" cy="41.8" rx="2.6" ry="8.4" transform="rotate(35 989 41.8)" fill="#fff" stroke="#444" stroke-width="1.1"/>
<path d="M1007.4 50.2V33.4H1011.4L1016.6 43.6V33.4H1020.6V50.2H1016.6L1011.4 40V50.2Z" fill="#fff" stroke="#555" stroke-width="1" stroke-linejoin="round"/>
<path d="M1009.2 35V48.6M1018.8 35V48.6M1009.6 35L1018.4 48.4" stroke="#888" stroke-width="0.8"/>
<path d="M1013 36.4L1016 42.2M1012 39.6L1015.6 46.6" stroke="#aaa" stroke-width="0.7"/>
<!-- G10 -->
<rect x="1035.5" y="40" width="14" height="9.7" rx="1.2" fill="#c8c8c8" stroke="#8a8a8a" stroke-width="1"/>
<circle cx="1047.1" cy="39.7" r="5.4" fill="#fff" stroke="#9a9a9a" stroke-width="0.9"/>
<text x="1047.1" y="42.8" font-family="Liberation Sans" font-size="8.5" fill="#5cc4ea" text-anchor="middle">M</text>
<rect x="1062.4" y="34.4" width="15.4" height="15.2" rx="3.2" fill="#e6e6ea" stroke="#5aa2bc" stroke-width="1"/>
<path d="M1066.2 38.6Q1068 37 1070 38.2Q1072 37 1073.8 38.6Q1075.4 40.2 1074 42Q1075.4 43.8 1073.8 45.4Q1072 47 1070 45.8Q1068 47 1066.2 45.4Q1064.6 43.8 1066 42Q1064.6 40.2 1066.2 38.6Z" fill="#40b2e2" stroke="#fff200" stroke-width="1.6"/>
<!-- G11 -->
<path d="M1093.2 34.4Q1093.2 33.6 1094 33.6H1104.2Q1105 33.6 1105 34.4V46.6L1101.4 50.4H1094Q1093.2 50.4 1093.2 49.6Z" fill="#fff" stroke="#333" stroke-width="1.2"/>
<path d="M1101.4 50.4V47.6Q1101.4 46.6 1102.4 46.6H1105" fill="none" stroke="#333" stroke-width="1"/>
<path d="M1096.2 47.6V37.6Q1096.2 36.8 1097 36.8H1101" fill="none" stroke="#222" stroke-width="1.1"/>
<path d="M1101 35.2L1103.2 36.8L1101 38.4ZM1094.6 47L1096.2 49.4L1097.8 47Z" fill="#111"/>
<rect x="1119.4" y="33.6" width="11.4" height="16.6" rx="1.6" fill="#fff" stroke="#a0a0a0" stroke-width="1.3"/>
<path d="M1121.4 38.2V36.2H1123.2M1128.8 38.2V36.2H1127M1121.4 45.6V47.6H1123.2M1128.8 45.6V47.6H1127" fill="none" stroke="#444" stroke-width="1.1"/>
<g stroke="#6ccfe8" stroke-width="1"><path d="M1144.2 35.2V49M1147.8 35.2V49M1151.4 35.2V49M1155 35.2V49M1158.2 35.2V49"/><path d="M1143.8 35.4H1158.6M1143.8 38.9H1158.6M1143.8 42.2H1158.6M1143.8 45.6H1158.6M1143.8 48.9H1158.6"/></g>
<!-- G12 -->
<rect x="1172.6" y="34.6" width="15" height="15" rx="3.2" fill="#3a6fa8" stroke="#3a6fa8" stroke-width="0.8"/>
<circle cx="1180.1" cy="42.1" r="7.2" fill="#fff"/>
<path d="M1180.4 42.2Q1180.2 41.2 1181 41.4Q1182.2 41.8 1182 43Q1181.6 44.6 1179.8 44.6Q1177.6 44.4 1177.4 42Q1177.6 38.8 1180.6 38.6Q1184.4 38.6 1184.8 42.2Q1184.8 46.8 1180.2 47.2Q1175.2 47 1175 42Q1175.2 36.2 1180.6 36.2Q1186.8 36.4 1187 42.2" fill="none" stroke="#4a82bc" stroke-width="1.1"/>
<path d="M1174 36.4L1175.4 37.6M1186.2 36.4L1184.8 37.6M1174 47.8L1175.4 46.6" stroke="#fff" stroke-width="0.7"/>
<rect x="1198.5" y="34.3" width="15.2" height="15.2" rx="2.6" fill="#fff" stroke="#5a8ab8" stroke-width="1"/>
<g fill="#111"><circle cx="1203.8" cy="38.3" r="0.9"/><circle cx="1208" cy="38.3" r="0.9"/><circle cx="1201.8" cy="41.8" r="0.9"/><circle cx="1205.9" cy="41.8" r="0.9"/><circle cx="1210" cy="41.8" r="0.9"/><circle cx="1203.8" cy="45.3" r="0.9"/><circle cx="1208" cy="45.3" r="0.9"/></g>
<!-- G13 -->
<path d="M1231.4 42.4L1237.4 35.6Q1237.8 35.1 1238.4 35.1H1242.2V39.2L1235.6 46.2Z" fill="#4a4a4a"/>
<path d="M1230.6 43.2L1235 47L1233.6 48.4L1229.4 44.6Z" fill="#fff" stroke="#4a4a4a" stroke-width="0.9"/>
<path d="M1229.2 45.2L1233 48.6L1228.4 49Z" fill="#555"/>
<rect x="1252.6" y="35.3" width="17.2" height="7" fill="#f2f2f2" stroke="#8a8a8a" stroke-width="1"/>
<rect x="1252.6" y="35.3" width="2.6" height="7" fill="#8a8a8a"/>
<rect x="1267.2" y="35.3" width="2.6" height="7" fill="#8a8a8a"/>
<path d="M1255.6 39.6H1259" stroke="#7cc8e4" stroke-width="0.8"/>
<rect x="1255.6" y="41" width="10" height="8" fill="#fff" stroke="#aaa" stroke-width="1"/>
<path d="M1263.8 43L1258.6 45L1263.8 47M1261 44V46" fill="none" stroke="#222" stroke-width="1.3"/>
</svg>

<svg class="a" style="left:0;top:0" width="40" height="640">
<!-- select -->
<path d="M10.9 65.5L23.6 70.7L21.2 73.3L27.6 79.4Q28.2 80.2 27.4 81L26.6 82Q25.8 82.8 25 82L18.4 75.6L15.7 77.8Z" fill="#80d1ec" stroke="#2a7f9e" stroke-width="1.2" stroke-linejoin="round"/>
<!-- node edit -->
<path d="M16.5 93.5H23.6M16.5 93.5L12 99.1L14.6 105.5" fill="none" stroke="#555" stroke-width="0.9"/>
<g fill="#45bde6"><rect x="14.9" y="91.9" width="3.2" height="3.2"/><rect x="22" y="91.9" width="3.2" height="3.2"/><rect x="10.4" y="97.5" width="3.2" height="3.2"/><rect x="13" y="103.9" width="3.2" height="3.2"/></g>
<path d="M16.6 96.9L24.6 99.9L22.9 101.6L27.4 105.6Q27.9 106.2 27.4 106.8L26.6 107.6Q26 108.1 25.4 107.6L21 103.8L19.2 105.2Z" fill="#fff" stroke="#444" stroke-width="1" stroke-linejoin="round"/>
<!-- line/rect/rrect/ellipse -->
<path d="M12.7 135.4L25.1 122.3" stroke="#555" stroke-width="1.2"/>
<rect x="11.8" y="149.6" width="13.6" height="10.4" rx="1" fill="none" stroke="#555" stroke-width="1.2"/>
<rect x="11.8" y="175.6" width="13.6" height="10.4" rx="3" fill="none" stroke="#555" stroke-width="1.2"/>
<ellipse cx="18.7" cy="206.4" rx="7" ry="4.9" fill="none" stroke="#555" stroke-width="1.2"/>
<!-- polygon / curve / pens -->
<path d="M18 228.4L26.2 233.6L12.2 238.2L20.6 243.2Z" fill="none" stroke="#555" stroke-width="1.1" stroke-linejoin="round"/>
<path d="M19.4 261.4Q17.6 256.4 20.8 254.4Q24.6 252.8 25.6 256.6Q26.4 260.4 22 261.6L16.4 260.8Q12.2 260.2 11.6 263.6Q11.4 267.8 15.6 267.8Q19.4 267.4 19.4 261.4Z" fill="none" stroke="#555" stroke-width="1.1"/>
<path d="M18.2 280L14.2 287.6" stroke="#22a8dc" stroke-width="2.6" stroke-linecap="round"/>
<path d="M14.2 287.6L13.2 289.6" stroke="#cfe8f2" stroke-width="2"/>
<path d="M12 292.6L13.8 294.2L15.8 291.6L17.8 294.2L19.8 291.6L21.8 293.6L23.6 291.4L25.8 290.8" fill="none" stroke="#444" stroke-width="1"/>
<path d="M18.2 306L14.4 313.6" stroke="#ff8a00" stroke-width="2.6" stroke-linecap="round"/>
<path d="M14.4 313.6L13.4 315.6" stroke="#f4dcc0" stroke-width="2"/>
<path d="M12.4 317.6Q13.8 321.8 18.4 320Q22.6 317.6 26 317.8" fill="none" stroke="#444" stroke-width="1.1"/>
<!-- arc / pentagon -->
<path d="M16.8 336Q25.8 338.2 26.6 349.4" fill="none" stroke="#444" stroke-width="1.2"/>
<path d="M16.6 336.4L11.6 349.4H26.4" fill="none" stroke="#e4e4e4" stroke-width="0.8"/>
<path d="M18.7 362.6L25 367.4L22.7 374.8H14.7L12.4 367.4Z" fill="none" stroke="#555" stroke-width="1.2" stroke-linejoin="round"/>
<!-- text -->
<text x="17.6" y="403.2" font-family="Liberation Serif" font-weight="bold" font-size="15" fill="#3a3a3a" text-anchor="middle">A</text>
<path d="M24.4 391.4V404.4M23 391.2H25.8M23 404.6H25.8" stroke="#22b0e0" stroke-width="1"/>
<!-- eraser / knife -->
<path d="M11.6 430.2L15.2 425L24 420.2Q25 419.8 25.8 420.4L27.4 422.4Q27.8 423.4 27 424.2L19 432.4Q18 433.4 16.6 433.2L12.2 431.6Q11.2 431 11.6 430.2Z M15.2 425L18.8 427.8L27.2 423.2M18.8 427.8L16 433.2" fill="#fff" stroke="#444" stroke-width="1" stroke-linejoin="round"/>
<path d="M13.4 462.4L14 457.2L18.6 451.6L20.4 453.2L15.6 459Z" fill="#fff" stroke="#444" stroke-width="1" stroke-linejoin="round"/>
<path d="M18.4 451.8L23.2 446Q24 445.2 24.8 445.8L25.4 446.4Q26 447.2 25.2 448L20.4 453.4Z" fill="#fff" stroke="#444" stroke-width="1" stroke-linejoin="round"/>
<!-- design view etc -->
<rect x="12" y="494" width="14" height="10.4" fill="#80d1ec" stroke="#2f8fae" stroke-width="1.6"/>
<rect x="13.6" y="495.6" width="10.8" height="7.2" fill="#86d4ee" stroke="#6cc0dc" stroke-width="0.6"/>
<path d="M19 519.4Q15.6 517.4 11.8 518.6V530.4Q15.6 529.4 19 531.4Q22.4 529.4 26.2 530.4V518.6Q22.4 517.4 19 519.4ZM19 519.4V531.4" fill="#fafafa" stroke="#777" stroke-width="1"/>
<path d="M13.2 521.6Q15.8 521 17.6 522M13.2 524.2Q15.8 523.6 17.6 524.6M13.2 526.8Q15.8 526.2 17.6 527.2M20.4 522Q22.2 521 24.8 521.6M20.4 524.6Q22.2 523.6 24.8 524.2M20.4 527.2Q22.2 526.2 24.8 526.8" fill="none" stroke="#999" stroke-width="0.8"/>
<circle cx="18.5" cy="551.2" r="8" fill="#e6e6e6" stroke="#c8c8c8" stroke-width="0.8"/>
<circle cx="18.5" cy="551.2" r="6.8" fill="#1aa3d8"/>
<path d="M21.4 546.2Q18.6 544.8 16.6 546.4Q14.8 548.2 17.4 550Q20.6 551.8 20.4 553.8Q19.8 556.4 15.6 555.8" fill="none" stroke="#fff" stroke-width="1.7" stroke-linecap="round"/>
<rect x="11.6" y="590.8" width="14.8" height="11" fill="#80d1ec" stroke="#2f8fae" stroke-width="1.2"/>
<path d="M11.6 593.4H26.4" stroke="#2f8fae" stroke-width="1.2"/>
<path d="M15.4 615.4V624.8L22.8 620.1Z" fill="#6a6a6a"/>
</svg>

<svg class="a" style="left:0;top:0" width="1280" height="696">
<!-- panel icons -->
<g fill="none" stroke="#4a4a4a" stroke-width="1.4">
<rect x="944.6" y="145.4" width="15" height="15" rx="1.2"/>
<rect x="949.6" y="150.2" width="4.8" height="5.6" rx="0.8"/>
<path d="M940.1 153H944.6M959.6 153H963.8M952.1 141.1V145.4M952.1 160.4V164.6"/>
<path d="M941.3 205.3V228.2"/>
<rect x="941.3" y="206.6" width="21.2" height="4.8"/><rect x="941.3" y="214.6" width="7.8" height="4.4"/><rect x="941.3" y="222.6" width="14" height="4.8"/>
<path d="M952 241.2V264"/>
<rect x="941" y="243.1" width="21.6" height="4.4" fill="#fff"/><rect x="947.7" y="250.4" width="8.8" height="4.7" fill="#fff"/><rect x="944.7" y="258.2" width="14.4" height="4.7" fill="#fff"/>
<path d="M962.9 277.7V300.5"/>
<rect x="941.3" y="278.6" width="21.6" height="5.2"/><rect x="954.6" y="286.6" width="8.3" height="4.8"/><rect x="948.5" y="294.5" width="14.4" height="5.2"/>
<path d="M940.4 342.4H963.7"/>
<rect x="941.6" y="342.4" width="4.9" height="13.7"/><rect x="949.7" y="342.4" width="4.4" height="7.6"/><rect x="957.1" y="342.4" width="5.1" height="21.3"/>
<path d="M940.4 389H963.7"/>
<rect x="941.6" y="381.8" width="4.9" height="14.3" fill="#fff"/><rect x="949.2" y="385" width="5.4" height="7.6" fill="#fff"/><rect x="957.1" y="378.4" width="5.1" height="20.8" fill="#fff"/>
<path d="M940.4 435.7H963.7"/>
<rect x="941.6" y="421.6" width="4.9" height="14.1"/><rect x="949.7" y="427.4" width="4.4" height="8.3"/><rect x="957.1" y="414.4" width="5.1" height="21.3"/>
<rect x="939.9" y="478.2" width="5" height="21.4" rx="0.6"/><rect x="959.2" y="478.2" width="5" height="21.4" rx="0.6"/>
<path d="M945.6 489H958.4"/>
<rect x="941.2" y="513.2" width="21.6" height="4.8" rx="0.6"/><rect x="941.2" y="532.2" width="21.6" height="4.8" rx="0.6"/>
<path d="M952 518.4V531.6"/>
</g>
<path d="M948 489L950.4 486.8V491.2ZM956 489L953.6 486.8V491.2ZM952 520.6L949.8 523H954.2ZM952 529.4L949.8 527H954.2Z" fill="#444"/>
<rect x="940.6" y="577.3" width="22.8" height="22.8" fill="#fff" stroke="#444" stroke-width="1.1"/>
<path d="M952 584.6V581M952 592.6V596M947.6 588.6H944M955.8 588.6H959.4" stroke="#aaa" stroke-width="1.2"/>
<path d="M952 579L949.2 582.2H954.8ZM952 598.4L949.2 595.2H954.8ZM942.4 588.6L945.6 585.8V591.4ZM961.6 588.6L958.4 585.8V591.4Z" fill="#aaa"/>
<rect x="947.8" y="584.6" width="7.8" height="7.8" rx="0.6" fill="#fff" stroke="#444" stroke-width="1.4"/>
<!-- gear & sync -->
<g transform="translate(1238 674.8)">
<path d="M-1.6 -9.2H1.6L2 -6.6L4.2 -5.6L6.3 -7.2L8.2 -5.3L6.6 -3.2L7.5 -1.1L10 -0.6V2.6L7.5 3.1L6.6 5.2L8.2 7.3L6.3 9.2L4.2 7.6L2 8.5L1.6 11H-1.6L-2 8.5L-4.2 7.6L-6.3 9.2L-8.2 7.3L-6.6 5.2L-7.5 3.1L-10 2.6V-0.6L-7.5 -1.1L-6.6 -3.2L-8.2 -5.3L-6.3 -7.2L-4.2 -5.6L-2 -6.6Z" transform="translate(0 -0.9) scale(0.92)" fill="#1a8fd6"/>
<circle cx="0" cy="0" r="3" fill="#fff"/>
</g>
<path d="M1257.9 668.4A7.2 7.2 0 0 0 1255.4 677.6" fill="none" stroke="#0c5f78" stroke-width="2.6"/>
<path d="M1252.6 676.2L1256.6 681.2L1258.6 675.6Z" fill="#0c5f78"/>
<path d="M1261.4 667.1A7.2 7.2 0 0 1 1269.2 674.6" fill="none" stroke="#18a0dc" stroke-width="2.6"/>
<path d="M1258.8 667.3L1263.6 663.6L1263 670.4Z" fill="#18a0dc"/>
<path d="M1269.4 676.2A7.2 7.2 0 0 1 1259 681" fill="none" stroke="#5bbde6" stroke-width="2.4"/>
<path d="M1269 694L1279 684M1273.4 694L1279 688.4M1277.4 694L1279 692.4" stroke="#9a9a9a" stroke-width="0.9"/>
<!-- bottom toolbar -->
<g fill="none" stroke="#b8b8b8" stroke-width="1.1">
<rect x="12.1" y="670.3" width="8.5" height="7.3"/><rect x="17.3" y="674" width="8.5" height="7.3"/>
<rect x="37.8" y="670.2" width="8.2" height="7.3"/><rect x="42.8" y="674" width="9" height="7.5"/>
</g>
<g fill="#8fd3ea">
<rect x="10.6" y="668.8" width="3" height="3"/><rect x="24.3" y="668.8" width="3" height="3"/><rect x="10.6" y="679.8" width="3" height="3"/><rect x="24.3" y="679.8" width="3" height="3"/>
<rect x="36.3" y="668.7" width="3" height="3"/><rect x="44.5" y="668.7" width="3" height="3"/><rect x="36.3" y="676" width="3" height="3"/><rect x="44.5" y="676" width="3" height="3"/>
<rect x="41.3" y="672.5" width="3" height="3"/><rect x="50.3" y="672.5" width="3" height="3"/><rect x="41.3" y="680" width="3" height="3"/><rect x="50.3" y="680" width="3" height="3"/>
</g>
<g fill="none" stroke="#2a86a6" stroke-width="1.3">
<path d="M65.6 677.2V669.1H74.3V674.3"/><path d="M74.3 669.1H79.6V674.3M65.6 677.2V681.6H71" stroke-dasharray="1.2 1.4"/>
<rect x="71" y="674.3" width="8.6" height="7.3"/>
<rect x="79.6" y="681.6" width="2.8" height="2.8" stroke-width="1.1"/>
</g>
<g fill="none" stroke="#b6dde8" stroke-width="1.2">
<rect x="91.5" y="669.3" width="9.4" height="8.3"/><rect x="96.6" y="674.1" width="9.2" height="7.9" fill="#fff"/>
</g>
<rect x="118" y="669.2" width="8.8" height="8.1" fill="none" stroke="#2a86a6" stroke-width="1.3"/>
<rect x="123.2" y="674.2" width="8.5" height="7.6" fill="#38b1dc" stroke="#1f7d9e" stroke-width="1.3"/>
<rect x="131.7" y="681.8" width="2.8" height="2.8" fill="none" stroke="#1f7d9e" stroke-width="1.1"/>
<g fill="none" stroke="#aaa" stroke-width="0.9">
<path d="M151.4 667.6L155.9 670.2V676.6L151.4 679.3L147 676.6V670.2ZM147 670.2L151.4 672.8L155.9 670.2M151.4 672.8V679.3"/>
</g>
<g fill="#fff" stroke="#9fd4e6" stroke-width="0.9">
<path d="M157.8 671.4L162.7 674.2V680L157.8 682.8L153 680V674.2ZM153 674.2L157.8 677L162.7 674.2M157.8 677V682.8"/>
</g>
<path d="M173.6 668.9Q180 674 188 682.8M188 668.9Q180 674 173.6 682.8" fill="none" stroke="#a8a8a8" stroke-width="0.9"/>
<g stroke="#aaa" stroke-width="0.9">
<rect x="203.2" y="668.9" width="6.3" height="6.8" fill="#ddd"/><rect x="210.4" y="676" width="6.3" height="7" fill="#ddd"/><rect x="206.7" y="672.3" width="6.3" height="6.7" fill="#fff"/>
<rect x="228.9" y="668.9" width="6.8" height="6.8" fill="#ddd"/><rect x="236.5" y="676" width="6.3" height="7" fill="#ddd"/>
<path d="M235.7 672.3H238.6V676M232.3 675.7V679.4H236.5" fill="none"/>
</g>
<path d="M257.4 682.6V673.6H263.6Q264 669.2 268.2 669.2Q272.4 669.6 272.4 673.6Q272.2 676.8 269.6 677.6V682.6Z" fill="#e6e6e6" stroke="#d0d0d0" stroke-width="0.9"/>
<circle cx="290.9" cy="676" r="7" fill="#fff" stroke="#444" stroke-width="1.1"/>
<circle cx="290.9" cy="676" r="4.8" fill="none" stroke="#1aa3d8" stroke-width="1.4"/>
<ellipse cx="290.9" cy="676" rx="2.2" ry="3" fill="none" stroke="#444" stroke-width="1.2"/>
<path d="M311.1 683.4L318.7 672.9L323.7 683.4Z" fill="#bfe4f0"/>
<path d="M314.6 681L324.6 672.4" stroke="#c4c4c4" stroke-width="1.6"/>
<circle cx="326.6" cy="670.6" r="3.2" fill="#e8e8e8" stroke="#cfcfcf" stroke-width="0.8"/>
<path d="M344 681.5V672.5L351.3 668.6V670.8" fill="none" stroke="#3a3a3a" stroke-width="1"/>
<path d="M346.3 674.6L353.6 670.3V679.1L346.3 683.4Z" fill="#fff" stroke="#3a3a3a" stroke-width="1"/>
<path d="M347.3 675.6L351.8 673V680.4L347.3 682.8Z" fill="#12b0e0"/>
</svg>


</body></html>
